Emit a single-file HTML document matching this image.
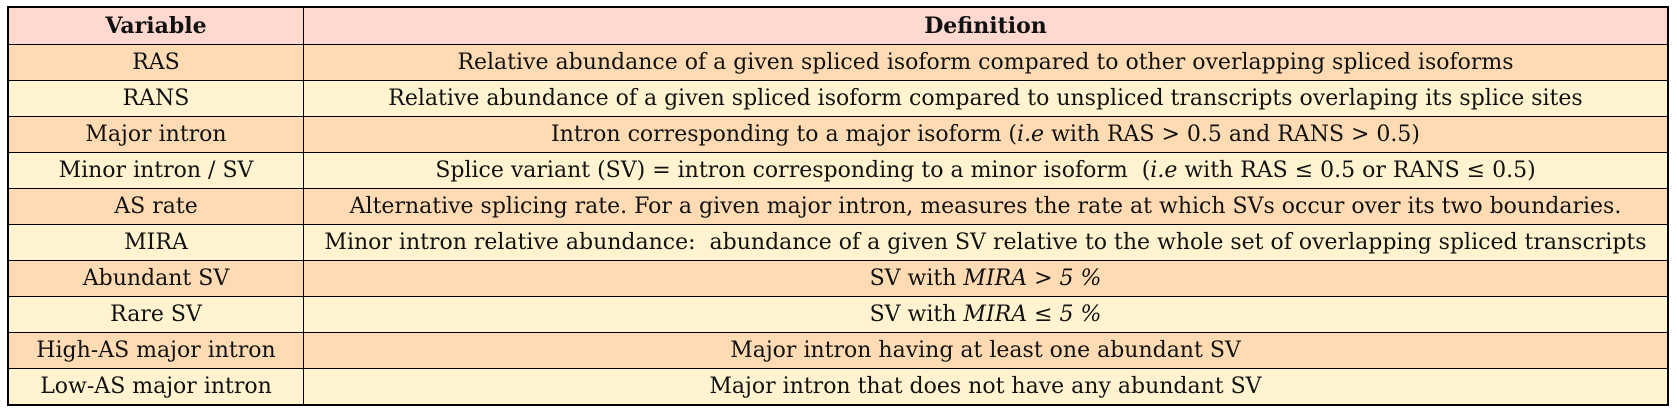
<!DOCTYPE html>
<html><head><meta charset="utf-8"><style>
html,body{margin:0;padding:0;background:#fff;width:1677px;height:411px;overflow:hidden}
table{position:absolute;left:7px;top:6px;width:1662px;border-collapse:collapse;border:2px solid #000;font-family:"DejaVu Serif","Liberation Serif",serif;font-size:22px;color:#111}
td,th{border:1px solid #000;text-align:center;padding:0;height:35px;line-height:24px;white-space:nowrap}
th{height:36px;background:#ffd9cf;font-weight:bold;font-size:22px}
td:first-child,th:first-child{width:294px}
tr.o td{background:#ffdbb3}
tr.l td{background:#fff4cf}
</style></head><body>
<table>
<tr><th>Variable</th><th>Definition</th></tr>
<tr class="o"><td>RAS</td><td>Relative abundance of a given spliced isoform compared to other overlapping spliced isoforms</td></tr>
<tr class="l"><td>RANS</td><td>Relative abundance of a given spliced isoform compared to unspliced transcripts overlaping its splice sites</td></tr>
<tr class="o"><td>Major intron</td><td>Intron corresponding to a major isoform (<i>i.e</i> with RAS &gt; 0.5 and RANS &gt; 0.5)</td></tr>
<tr class="l"><td>Minor intron / SV</td><td>Splice variant (SV) = intron corresponding to a minor isoform &nbsp;(<i>i.e</i> with RAS ≤ 0.5 or RANS ≤ 0.5)</td></tr>
<tr class="o"><td>AS rate</td><td>Alternative splicing rate. For a given major intron, measures the rate at which SVs occur over its two boundaries.</td></tr>
<tr class="l"><td>MIRA</td><td>Minor intron relative abundance: &nbsp;abundance of a given SV relative to the whole set of overlapping spliced transcripts</td></tr>
<tr class="o"><td>Abundant SV</td><td>SV with <i>MIRA &gt; 5 %</i></td></tr>
<tr class="l"><td>Rare SV</td><td>SV with <i>MIRA ≤ 5 %</i></td></tr>
<tr class="o"><td>High-AS major intron</td><td>Major intron having at least one abundant SV</td></tr>
<tr class="l"><td>Low-AS major intron</td><td>Major intron that does not have any abundant SV</td></tr>
</table>
</body></html>
